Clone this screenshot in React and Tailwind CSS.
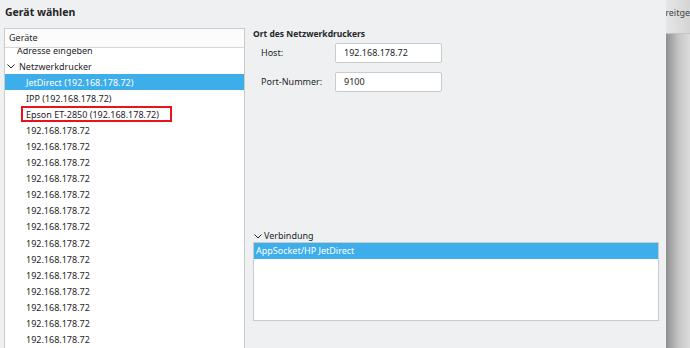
import React from "react";

const ips = Array.from({ length: 14 }, () => "192.168.178.72");

function Chevron({ className }) {
  return (
    <svg className={className} width="8" height="5" viewBox="0 0 8 5" fill="none">
      <path d="M0.5 0.5 L4 4 L7.5 0.5" stroke="#232627" strokeWidth="1" />
    </svg>
  );
}

export default function App() {
  return (
    <div
      className="w-[690px] h-[348px] flex overflow-hidden text-[#232627]"
      style={{ fontFamily: '"Noto Sans", "DejaVu Sans", sans-serif' }}
    >
      <div className="w-[671px] h-full bg-[#eff0f1] flex flex-col">
        <div className="h-[28px] flex items-center px-[5px] pb-[4px] font-bold text-[10.5px] leading-none">
          Gerät wählen
        </div>
        <div className="flex flex-1 min-h-0 pl-[4px]">
          <div className="w-[241px] h-[330px] shrink-0 flex flex-col border border-[#c9cbcc] bg-white overflow-hidden">
            <div className="h-[19px] shrink-0 flex items-center px-[4px] text-[9px] bg-[#fcfcfc] border-b border-[#d6d7d8]">
              Geräte
            </div>
            <div className="flex-1 overflow-hidden text-[9px] leading-none">
              <div className="-mt-[6px] flex flex-col">
                <div className="h-[16px] flex items-center pl-[12px]">Adresse eingeben</div>
                <div className="h-[16px] flex items-center pl-[2px] gap-[4px]">
                  <Chevron className="shrink-0" />
                  <span>Netzwerkdrucker</span>
                </div>
                <div className="h-[16px] flex items-center pl-[21px] bg-[#3daee9] text-white">
                  JetDirect (192.168.178.72)
                </div>
                <div className="h-[16px] flex items-center pl-[21px]">IPP (192.168.178.72)</div>
                <div className="h-[16px] flex items-center pl-[16px]">
                  <span className="w-[151px] h-[16px] flex items-center border-2 border-[#e8141b] px-[3px]">
                    Epson ET-2850 (192.168.178.72)
                  </span>
                </div>
                {ips.map((ip, i) => (
                  <div key={i} className="h-[16.15px] flex items-center pl-[21px]">
                    {ip}
                  </div>
                ))}
              </div>
            </div>
          </div>
          <div className="flex-1 flex flex-col pl-[8px] pr-[7px]">
            <div className="h-[12px] flex items-center font-bold text-[8.5px]">Ort des Netzwerkdruckers</div>
            <div className="flex items-center mt-[3px] pl-[8px] text-[9px]">
              <span className="w-[74px]">Host:</span>
              <div className="w-[107px] h-[20px] bg-white border border-[#c9cbcc] rounded-[2px] flex items-center px-[8px]">
                192.168.178.72
              </div>
            </div>
            <div className="flex items-center mt-[9px] pl-[8px] text-[9px]">
              <span className="w-[74px]">Port-Nummer:</span>
              <div className="w-[107px] h-[20px] bg-white border border-[#c9cbcc] rounded-[2px] flex items-center px-[8px]">
                9100
              </div>
            </div>
            <div className="mt-[138px] h-[12px] flex items-center gap-[2px] text-[9px]">
              <Chevron className="ml-[1px]" />
              <span>Verbindung</span>
            </div>
            <div className="h-[79px] bg-white border border-[#c9cbcc] text-[9px]">
              <div className="h-[16px] flex items-center px-[2px] bg-[#3daee9] text-white">
                AppSocket/HP JetDirect
              </div>
            </div>
          </div>
        </div>
      </div>
      <div className="flex-1 flex flex-col">
        <div className="h-[34px] bg-gradient-to-r from-[#e6e6e6] to-[#d4d4d4] border-b border-[#c4c4c4] flex items-start pt-[6px] overflow-hidden text-[9px] text-[#444] whitespace-nowrap">
          <span className="-ml-[1px]">reitge</span>
        </div>
        <div className="flex-1 bg-gradient-to-r from-[#8f8f8f] via-[#c4c4c4] to-[#dcdcdc]"></div>
      </div>
    </div>
  );
}
